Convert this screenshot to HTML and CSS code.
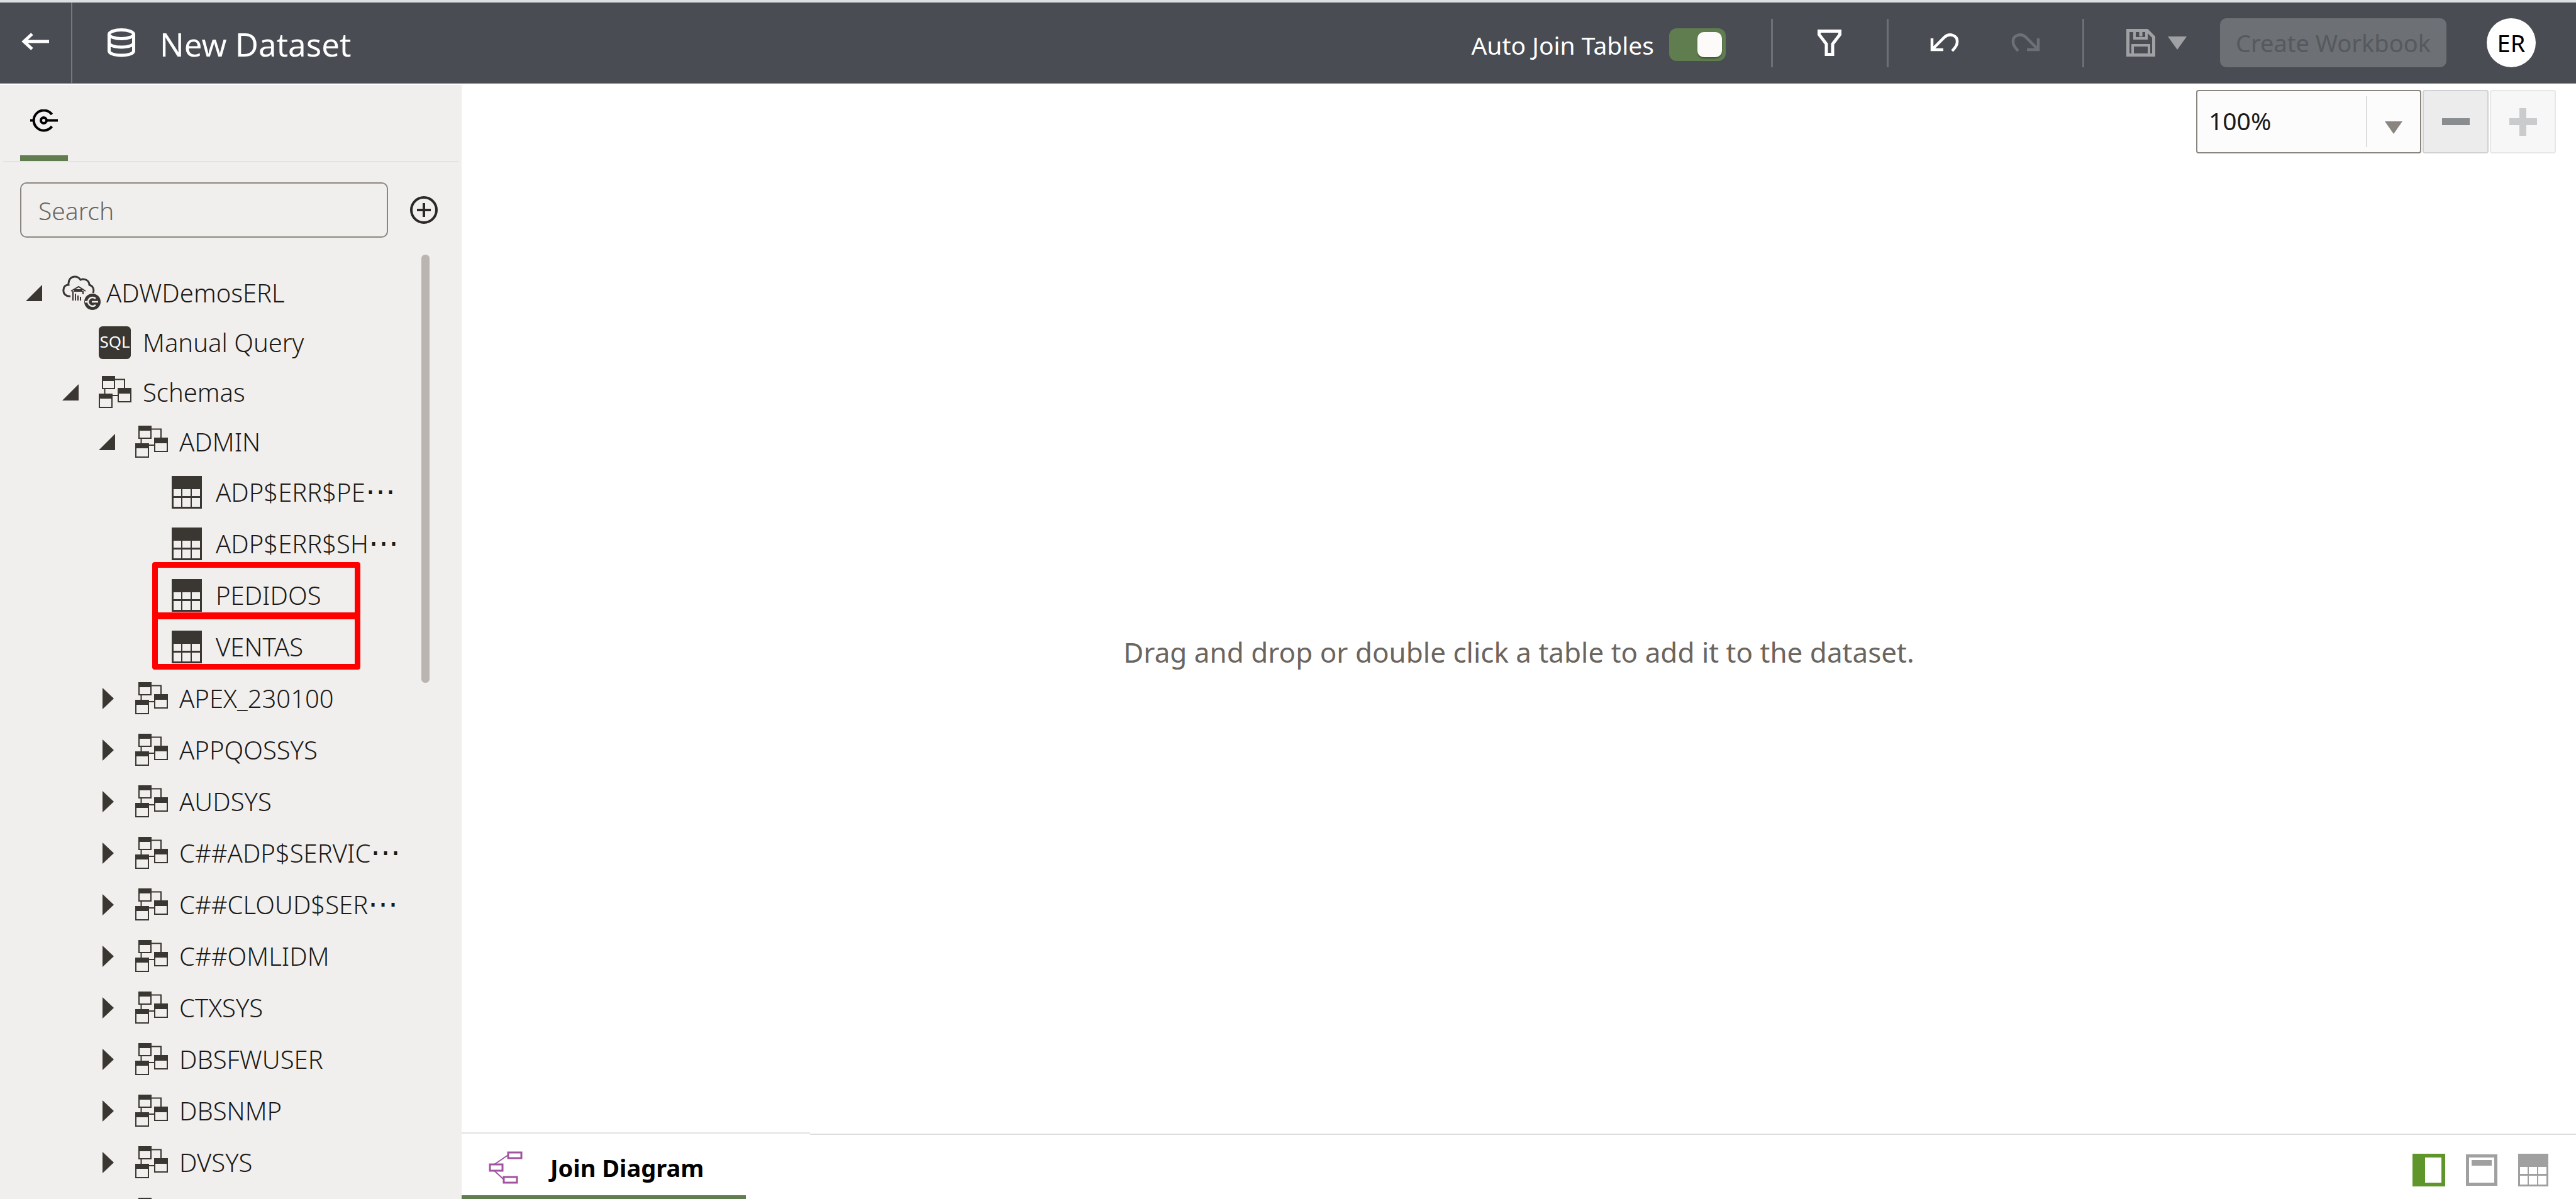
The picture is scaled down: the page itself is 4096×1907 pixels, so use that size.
FILE: index.html
```html
<!DOCTYPE html>
<html lang="en">
<head>
<meta charset="utf-8">
<title>New Dataset</title>
<link rel="stylesheet" href="styles.css">
</head>
<body>
<svg class="sprite" aria-hidden="true">
  <symbol id="i-schema" viewBox="0 0 52 52">
    <path d="M26 5.500H41V20M9.500 20V29M22 31H30" fill="none" stroke="#3a3631" stroke-width="2"/>
    <path d="M6 1H25V20H6ZM31 20H51V41H31ZM1 29H21V50H1Z" fill="none" stroke="#3a3631" stroke-width="2"/>
    <path d="M5 0H26V8H5ZM30 19H52V28H30ZM0 28H22V36H0Z" fill="#3a3631"/>
  </symbol>
  <symbol id="i-table" viewBox="0 0 48 52">
    <path d="M0 0H48V52H0ZM3 21V32H15V21ZM17 21V32H30V21ZM32 21V32H45V21ZM3 35V49H15V35ZM17 35V49H30V35ZM32 35V49H45V35Z" fill="currentColor" fill-rule="evenodd"/>
  </symbol>
  <symbol id="i-open" viewBox="0 0 26 26"><path d="M26 0V26H0Z" fill="#3a3631"/></symbol>
  <symbol id="i-closed" viewBox="0 0 26 34"><path d="M6 0L24 17L6 34Z" fill="#3a3631"/></symbol>
  <symbol id="i-undo" viewBox="0 0 48 30">
    <path d="M3 8V26H21M4 25L23 6C31 -1 44 3 43 14C43 19 39 24 35 28" fill="none" stroke="currentColor" stroke-width="4.500"/>
  </symbol>
</svg>

<header class="topbar">
  <button class="back" aria-label="Back">
    <svg width="44" height="28" viewBox="0 0 44 28"><path d="M44 14H4M17 2L4 14L17 26" fill="none" stroke="#fff" stroke-width="5"/></svg>
  </button>
  <div class="heading">
    <svg width="46" height="46" viewBox="0 0 46 46" fill="none" stroke="#fff" stroke-width="5"><ellipse cx="23" cy="9.500" rx="19.500" ry="7"/><path d="M3.500 9.500V36C3.500 40 12 43 23 43S42.500 40 42.500 36V9.500M3.500 23C3.500 27 12 30 23 30S42.500 27 42.500 23"/></svg>
    <h1>New Dataset</h1>
  </div>
  <label class="autojoin">Auto Join Tables <input type="checkbox" class="switch" checked></label>
  <span class="rule rule-a"></span>
  <button class="tool filter" aria-label="Filter">
    <svg width="38" height="42" viewBox="0 0 38 42"><path d="M2.500 2.500H35.500V8L24 23V39.500H14V23L2.500 8Z" fill="none" stroke="#fff" stroke-width="5"/></svg>
  </button>
  <span class="rule rule-b"></span>
  <button class="tool undo" aria-label="Undo"><svg width="48" height="30"><use href="#i-undo"/></svg></button>
  <button class="tool redo" aria-label="Redo" disabled><svg width="48" height="30"><use href="#i-undo" transform="matrix(-1 0 0 1 48 0)"/></svg></button>
  <span class="rule rule-c"></span>
  <button class="tool save" aria-label="Save" disabled>
    <svg width="46" height="44" viewBox="0 0 46 44" fill="none" stroke="#a0a1a4"><path d="M2.500 2.500H33L43.500 13V41.500H2.500Z" stroke-width="5"/><path d="M13 2V15H32V2M10 42V26H36V42" stroke-width="4"/><path d="M23 5V12" stroke-width="5"/></svg>
    <svg width="30" height="21" viewBox="0 0 30 21"><path d="M0 0H30L15 21Z" fill="#a0a1a4"/></svg>
  </button>
  <button class="create" disabled>Create Workbook</button>
  <button class="avatar">ER</button>
</header>

<div class="workspace">
  <aside class="sidebar">
    <nav class="side-tabs">
      <button class="side-tab" aria-label="Connections">
        <svg width="44" height="36" viewBox="0 0 44 36" fill="none" stroke="#000" stroke-width="4"><path d="M34.500 8A16 16 0 1 0 34.500 27M0 17.500H6M27 17.500H44"/><circle cx="21.500" cy="17.500" r="4.500"/></svg>
      </button>
    </nav>
    <div class="search-row">
      <input class="search" type="text" placeholder="Search" aria-label="Search">
      <button class="add" aria-label="Add">
        <svg width="44" height="44" viewBox="0 0 44 44" fill="none" stroke="#2b2825" stroke-width="4"><circle cx="22" cy="22" r="20"/><path d="M22 11V33M11 22H33"/></svg>
      </button>
    </div>
    <div class="tree-pane">
      <ul class="tree">
        <li>
          <div class="row top"><button class="twist" aria-label="Collapse"><svg width="26" height="26"><use href="#i-open"/></svg></button>
            <span class="icon"><svg width="62" height="56" viewBox="0 0 62 56" fill="none" stroke="#3a3631"><path d="M13 33C6 34 1 29 2 23C2 18 5 15 10 15C9 7 14 2 20 2C24 2 27 4 29 7C35 4 43 8 43 15C49 17 51 22 49 28" stroke-width="3"/><path d="M14 25L26 18L37 25M17 25V40M33 25V30M21 40V29M25 40V32M29 40V34" stroke-width="2"/><path d="M19 22H32V26H19Z" fill="#3a3631" stroke="none"/><circle cx="48" cy="42" r="13" fill="#3a3631" stroke="none"/><path d="M53 37A7 7 0 1 0 53 47M36 42H41M47 42H57" stroke="#f0efed" stroke-width="2.500"/></svg></span>
            <span class="label">ADWDemosERL</span></div>
          <ul>
            <li><div class="row top"><span class="twist"></span><span class="icon"><span class="sql">SQL</span></span><span class="label">Manual Query</span></div></li>
            <li>
              <div class="row top"><button class="twist" aria-label="Collapse"><svg width="26" height="26"><use href="#i-open"/></svg></button><span class="icon"><svg width="52" height="52"><use href="#i-schema"/></svg></span><span class="label">Schemas</span></div>
              <ul>
                <li>
                  <div class="row top"><button class="twist" aria-label="Collapse"><svg width="26" height="26"><use href="#i-open"/></svg></button><span class="icon"><svg width="52" height="52"><use href="#i-schema"/></svg></span><span class="label">ADMIN</span></div>
                  <ul>
                    <li><div class="row"><span class="twist"></span><span class="icon"><svg width="48" height="52"><use href="#i-table"/></svg></span><span class="label">ADP$ERR$PE<span class="more">⋯</span></span></div></li>
                    <li><div class="row"><span class="twist"></span><span class="icon"><svg width="48" height="52"><use href="#i-table"/></svg></span><span class="label">ADP$ERR$SH<span class="more">⋯</span></span></div></li>
                    <li><div class="row marked"><span class="twist"></span><span class="icon"><svg width="48" height="52"><use href="#i-table"/></svg></span><span class="label">PEDIDOS</span></div></li>
                    <li><div class="row marked"><span class="twist"></span><span class="icon"><svg width="48" height="52"><use href="#i-table"/></svg></span><span class="label">VENTAS</span></div></li>
                  </ul>
                </li>
                <li><div class="row"><button class="twist" aria-label="Expand"><svg width="26" height="34"><use href="#i-closed"/></svg></button><span class="icon"><svg width="52" height="52"><use href="#i-schema"/></svg></span><span class="label">APEX_230100</span></div></li>
                <li><div class="row"><button class="twist" aria-label="Expand"><svg width="26" height="34"><use href="#i-closed"/></svg></button><span class="icon"><svg width="52" height="52"><use href="#i-schema"/></svg></span><span class="label">APPQOSSYS</span></div></li>
                <li><div class="row"><button class="twist" aria-label="Expand"><svg width="26" height="34"><use href="#i-closed"/></svg></button><span class="icon"><svg width="52" height="52"><use href="#i-schema"/></svg></span><span class="label">AUDSYS</span></div></li>
                <li><div class="row"><button class="twist" aria-label="Expand"><svg width="26" height="34"><use href="#i-closed"/></svg></button><span class="icon"><svg width="52" height="52"><use href="#i-schema"/></svg></span><span class="label">C##ADP$SERVIC<span class="more">⋯</span></span></div></li>
                <li><div class="row"><button class="twist" aria-label="Expand"><svg width="26" height="34"><use href="#i-closed"/></svg></button><span class="icon"><svg width="52" height="52"><use href="#i-schema"/></svg></span><span class="label">C##CLOUD$SER<span class="more">⋯</span></span></div></li>
                <li><div class="row"><button class="twist" aria-label="Expand"><svg width="26" height="34"><use href="#i-closed"/></svg></button><span class="icon"><svg width="52" height="52"><use href="#i-schema"/></svg></span><span class="label">C##OMLIDM</span></div></li>
                <li><div class="row"><button class="twist" aria-label="Expand"><svg width="26" height="34"><use href="#i-closed"/></svg></button><span class="icon"><svg width="52" height="52"><use href="#i-schema"/></svg></span><span class="label">CTXSYS</span></div></li>
                <li><div class="row"><button class="twist" aria-label="Expand"><svg width="26" height="34"><use href="#i-closed"/></svg></button><span class="icon"><svg width="52" height="52"><use href="#i-schema"/></svg></span><span class="label">DBSFWUSER</span></div></li>
                <li><div class="row"><button class="twist" aria-label="Expand"><svg width="26" height="34"><use href="#i-closed"/></svg></button><span class="icon"><svg width="52" height="52"><use href="#i-schema"/></svg></span><span class="label">DBSNMP</span></div></li>
                <li><div class="row"><button class="twist" aria-label="Expand"><svg width="26" height="34"><use href="#i-closed"/></svg></button><span class="icon"><svg width="52" height="52"><use href="#i-schema"/></svg></span><span class="label">DVSYS</span></div></li>
                <li><div class="row"><span class="twist"></span><span class="icon"><svg width="52" height="52"><use href="#i-schema"/></svg></span></div></li>
              </ul>
            </li>
          </ul>
        </li>
      </ul>
      <div class="scrollbar"><div class="scroll-thumb"></div></div>
    </div>
  </aside>

  <main class="canvas">
    <div class="zoombar">
      <div class="zoom-level">
        <select aria-label="Zoom"><option>100%</option></select>
        <span class="zoom-arrow"><svg width="28" height="20" viewBox="0 0 28 20"><path d="M0 0H28L14 20Z" fill="#8b8580"/></svg></span>
      </div>
      <button class="zoom-btn" aria-label="Zoom out"><svg width="44" height="44" viewBox="0 0 44 44"><path d="M0 16H44V27H0Z" fill="#8a8d8f"/></svg></button>
      <button class="zoom-btn off" aria-label="Zoom in" disabled><svg width="44" height="44" viewBox="0 0 44 44"><path d="M0 16H16V0H27V16H44V27H27V44H16V27H0Z" fill="#c9cbcc"/></svg></button>
    </div>
    <p class="hint">Drag and drop or double click a table to add it to the dataset.</p>
    <footer class="bottombar">
      <div class="tabs">
        <button class="tab">
          <svg width="54" height="54" viewBox="0 0 54 54" fill="none" stroke="#a054a0" stroke-width="3"><path d="M31 3H52V12H31ZM2 22H22V32H2ZM24 42H45V51H24Z"/><path d="M31 7L9 22M9 32L24 46" stroke-width="2"/></svg>
          Join Diagram
        </button>
      </div>
      <div class="views">
        <button aria-label="Side panel"><svg width="52" height="52" viewBox="0 0 52 52"><path d="M0 0H52V52H0ZM20 6V46H46V6Z" fill="#5f962b" fill-rule="evenodd"/></svg></button>
        <button aria-label="Header panel"><svg width="50" height="50" viewBox="0 0 50 50"><path d="M0 0H50V50H0ZM5 5V45H45V5ZM9 9H41V18H9Z" fill="#a0a0a0" fill-rule="evenodd"/></svg></button>
        <button class="grid-view" aria-label="Table view"><svg width="48" height="52"><use href="#i-table"/></svg></button>
      </div>
    </footer>
  </main>
</div>
</body>
</html>
```

FILE: styles.css
```css
*, *::before, *::after { box-sizing: border-box; }

body {
  margin: 0;
  height: 100vh;
  display: flex;
  flex-direction: column;
  overflow: hidden;
  background: #fff;
  color: #1c1a18;
  font-family: "Noto Sans", sans-serif;
  font-size: 38px;
}

button, input, select { font: inherit; color: inherit; }
button { border: 0; padding: 0; background: none; }
svg { display: block; flex: none; }
ul { list-style: none; margin: 0; padding: 0; }
.sprite { position: absolute; width: 0; height: 0; }

/* top bar */
.topbar {
  display: flex;
  align-items: center;
  flex: none;
  height: 133px;
  padding-right: 64px;
  border-top: 4px solid #dcdfe1;
  border-bottom: 1px solid #6d7075;
  background: #494c53;
  color: #fff;
}
.back {
  align-self: stretch;
  width: 115px;
  padding: 0 0 4px 34px;
  border-right: 2px solid #75787d;
}
.heading { display: flex; align-items: center; gap: 38px; margin-left: 55px; flex: 1; }
.heading h1 { margin: 0; padding-top: 4px; font-size: 51px; line-height: 60px; font-weight: 400; }
.autojoin { display: flex; align-items: center; gap: 24px; font-size: 39px; padding-top: 6px; }
.switch {
  appearance: none;
  display: flex;
  justify-content: flex-end;
  width: 90px;
  height: 52px;
  margin: 0;
  padding: 6px;
  border-radius: 12px;
  background: #5f7d4f;
}
.switch::before {
  content: "";
  width: 39px;
  height: 40px;
  border-radius: 10px;
  background: #fcfbfa;
  box-shadow: 0 2px 2px #3c5230;
}
.rule { width: 3px; height: 77px; background: #6d7075; }
.rule-a { margin-left: 72px; }
.rule-b { margin-left: 72px; }
.rule-c { margin-left: 67px; }
.filter { margin-left: 71px; }
.undo { margin-left: 66px; }
.redo { margin-left: 79px; color: #6d7075; }
.save { display: flex; align-items: center; gap: 20px; margin-left: 67px; }
.create {
  width: 360px;
  height: 78px;
  margin-left: 53px;
  border-radius: 10px;
  background: #6d7075;
  color: #56595d;
}
.avatar {
  width: 78px;
  height: 78px;
  margin-left: 64px;
  border-radius: 50%;
  background: #fff;
  color: #000;
}

.workspace { display: flex; flex: 1; min-height: 0; }

/* sidebar */
.sidebar {
  display: flex;
  flex-direction: column;
  flex: none;
  width: 734px;
  margin-top: 2px;
  background: #f0efed;
}
.side-tabs { display: flex; height: 123px; margin: 0 5px; padding-left: 27px; border-bottom: 2px solid #e4e2e0; }
.side-tab { display: flex; justify-content: center; width: 76px; padding-top: 39px; border-bottom: 9px solid #5f7d4f; }
.search-row { display: flex; align-items: center; gap: 35px; padding: 32px 32px 27px; }
.search {
  width: 585px;
  height: 88px;
  padding: 0 27px;
  border: 2px solid #8b8580;
  border-radius: 10px;
  background: transparent;
  font-weight: 300;
  font-size: 39px;
}
.search::placeholder { color: #6b6660; opacity: 1; }

.tree-pane { display: flex; flex: 1; min-height: 0; overflow: hidden; }
.tree { width: 670px; padding: 21px 0 0 41px; font-size: 40px; font-weight: 300; }
.tree ul { padding-left: 58px; }
.row { display: flex; align-items: center; height: 82px; white-space: nowrap; color: #3a3631; }
.row.top { height: 79px; }
.twist { display: flex; width: 58px; flex: none; }
.icon { display: flex; width: 70px; flex: none; }
.label { line-height: 54px; color: #1c1a18; }
.more { font-size: 48px; font-weight: 400; line-height: 1; }
.sql {
  width: 51px;
  height: 52px;
  border-radius: 6px;
  background: #3a3631;
  color: #fff;
  font-size: 26px;
  font-weight: 400;
  line-height: 48px;
  text-align: center;
}
.marked { position: relative; }
.marked::after {
  content: "";
  position: absolute;
  top: -12px;
  left: 27px;
  width: 331px;
  height: 89px;
  border: 9px solid #f00;
  border-radius: 4px;
}
.scrollbar { width: 13px; flex: none; }
.scroll-thumb { height: 681px; border-radius: 6px; background: #bab5b1; }

/* canvas */
.canvas { display: flex; flex-direction: column; flex: 1; min-width: 0; }
.zoombar { display: flex; justify-content: flex-end; gap: 2px; padding: 10px 32px 28px 0; }
.zoom-level {
  position: relative;
  width: 358px;
  height: 101px;
  border: 2px solid #8b8580;
  border-radius: 4px;
  background: #fcfcfc;
}
.zoom-level select {
  appearance: none;
  width: 100%;
  height: 100%;
  padding: 0 100px 4px 18px;
  border: 0;
  background: none;
  font-size: 39px;
}
.zoom-arrow {
  position: absolute;
  top: 8px;
  right: 0;
  bottom: 8px;
  width: 86px;
  padding: 40px 0 0 28px;
  border-left: 2px solid #dfdddb;
  pointer-events: none;
}
.zoom-btn {
  display: flex;
  align-items: center;
  justify-content: center;
  width: 105px;
  height: 101px;
  border: 2px solid #cfd1d2;
  border-radius: 4px;
  background: #ececed;
}
.zoom-btn.off { border-color: #e6e7e7; background: #f7f7f7; }
.hint {
  flex: 1;
  display: flex;
  align-items: center;
  justify-content: center;
  margin: 0;
  color: #6b655f;
  font-size: 44px;
}

.bottombar { display: flex; align-items: flex-end; flex: none; }
.tabs { width: 554px; height: 106px; border-top: 2px solid #e4e2e0; }
.tab {
  display: flex;
  align-items: center;
  gap: 44px;
  width: 452px;
  height: 104px;
  padding: 10px 0 0 43px;
  border-bottom: 6px solid #5f7d4f;
  color: #000;
  font-weight: 700;
}
.views {
  display: flex;
  flex: 1;
  align-items: center;
  justify-content: flex-end;
  gap: 33px;
  height: 104px;
  padding: 10px 44px 0 0;
  border-top: 2px solid #dedede;
}
.grid-view { color: #a0a0a0; }
```
